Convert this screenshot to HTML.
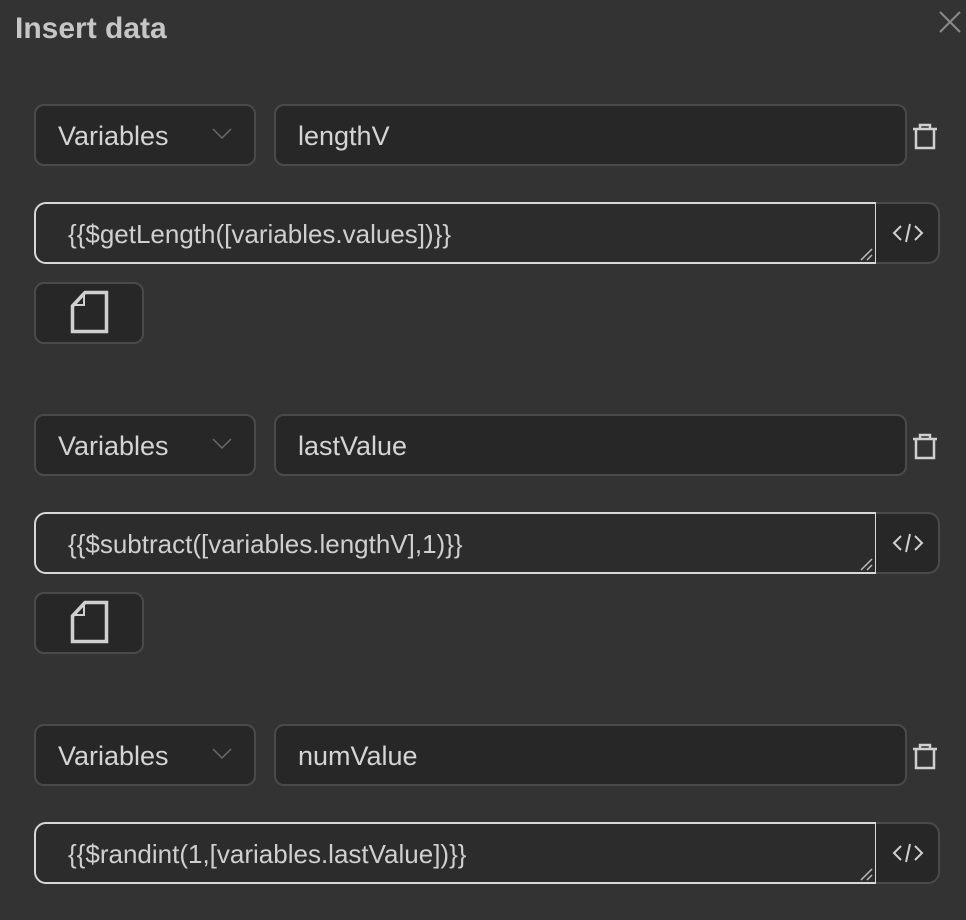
<!DOCTYPE html>
<html><head><meta charset="utf-8"><style>
*{box-sizing:border-box;margin:0;padding:0}
body{width:966px;height:900px;background:#333333;position:relative;overflow:hidden;font-family:"Liberation Sans",sans-serif;color:#d4d4d4}
.t{position:absolute;left:15px;top:12px;font-size:30px;font-weight:bold;color:#c6c6c6}
.x{position:absolute;left:938px;top:10px}
.sel,.inp,.ta,.cb,.fb{position:absolute;border:2px solid #4a4a4a;background:#272727;border-radius:10px}
.sel{left:34px;width:222px;height:62px;font-size:27px;padding:15px 0 0 22px}
.inp{left:274px;width:633px;height:62px;font-size:27px;padding:15px 0 0 22px}
.ta{left:34px;width:843px;height:62px;border-color:#d8d8d8;border-radius:12px 0 0 12px;background:#2c2c2c;font-size:26px;padding:15px 0 0 32px;color:#cfcfcf}
.cb{left:876px;width:64px;height:62px;border-radius:0 12px 12px 0;border-left:none}
.fb{left:34px;width:110px;height:62px}
svg{position:absolute}
</style></head><body>
<div class="t">Insert data</div>
<svg class="x" width="24" height="24" viewBox="0 0 24 24"><path d="M2 2L22 22M22 2L2 22" stroke="#8a8a8a" stroke-width="2"/></svg>

<div style="position:absolute;left:0;top:0">
<div class="sel" style="top:104px">Variables</div>
<svg style="left:212px;top:128px" width="20" height="12"><path d="M1 1L10 10L19 1" stroke="#6a6a6a" stroke-width="1.5" fill="none"/></svg>
<div class="inp" style="top:104px">lengthV</div>
<svg style="left:911px;top:122px" width="28" height="28"><path d="M2 7H26M9 7V3H19V7M5 7V26H23V7" stroke="#d0d0d0" stroke-width="2.5" fill="none"/></svg>
<div class="ta" style="top:202px">{{$getLength([variables.values])}}</div>
<svg style="left:858px;top:246px" width="16" height="16"><path d="M3 14L14 3M9 14L14 9" stroke="#bbb" stroke-width="1.5"/></svg>
<div class="cb" style="top:202px"></div>
<svg style="left:892px;top:222px" width="32" height="22"><path d="M9 4L2 11L9 18M23 4L30 11L23 18M18 2L14 20" stroke="#d0d0d0" stroke-width="2" fill="none"/></svg>
<div class="fb" style="top:282px"></div>
<svg style="left:70px;top:290px" width="40" height="44"><path d="M2.5 16L15 2.5H36.5V41.5H2.5Z" stroke="#d0d0d0" stroke-width="3.5" fill="none"/><path d="M4 15H14V4" stroke="#d0d0d0" stroke-width="2" fill="none"/></svg>
</div>

<div style="position:absolute;left:0;top:310px;width:966px;height:400px">
<div class="sel" style="top:104px">Variables</div>
<svg style="left:212px;top:128px" width="20" height="12"><path d="M1 1L10 10L19 1" stroke="#6a6a6a" stroke-width="1.5" fill="none"/></svg>
<div class="inp" style="top:104px">lastValue</div>
<svg style="left:911px;top:122px" width="28" height="28"><path d="M2 7H26M9 7V3H19V7M5 7V26H23V7" stroke="#d0d0d0" stroke-width="2.5" fill="none"/></svg>
<div class="ta" style="top:202px">{{$subtract([variables.lengthV],1)}}</div>
<svg style="left:858px;top:246px" width="16" height="16"><path d="M3 14L14 3M9 14L14 9" stroke="#bbb" stroke-width="1.5"/></svg>
<div class="cb" style="top:202px"></div>
<svg style="left:892px;top:222px" width="32" height="22"><path d="M9 4L2 11L9 18M23 4L30 11L23 18M18 2L14 20" stroke="#d0d0d0" stroke-width="2" fill="none"/></svg>
<div class="fb" style="top:282px"></div>
<svg style="left:70px;top:290px" width="40" height="44"><path d="M2.5 16L15 2.5H36.5V41.5H2.5Z" stroke="#d0d0d0" stroke-width="3.5" fill="none"/><path d="M4 15H14V4" stroke="#d0d0d0" stroke-width="2" fill="none"/></svg>
</div>

<div style="position:absolute;left:0;top:620px;width:966px;height:300px">
<div class="sel" style="top:104px">Variables</div>
<svg style="left:212px;top:128px" width="20" height="12"><path d="M1 1L10 10L19 1" stroke="#6a6a6a" stroke-width="1.5" fill="none"/></svg>
<div class="inp" style="top:104px">numValue</div>
<svg style="left:911px;top:122px" width="28" height="28"><path d="M2 7H26M9 7V3H19V7M5 7V26H23V7" stroke="#d0d0d0" stroke-width="2.5" fill="none"/></svg>
<div class="ta" style="top:202px">{{$randint(1,[variables.lastValue])}}</div>
<svg style="left:858px;top:246px" width="16" height="16"><path d="M3 14L14 3M9 14L14 9" stroke="#bbb" stroke-width="1.5"/></svg>
<div class="cb" style="top:202px"></div>
<svg style="left:892px;top:222px" width="32" height="22"><path d="M9 4L2 11L9 18M23 4L30 11L23 18M18 2L14 20" stroke="#d0d0d0" stroke-width="2" fill="none"/></svg>
</div>
</body></html>
